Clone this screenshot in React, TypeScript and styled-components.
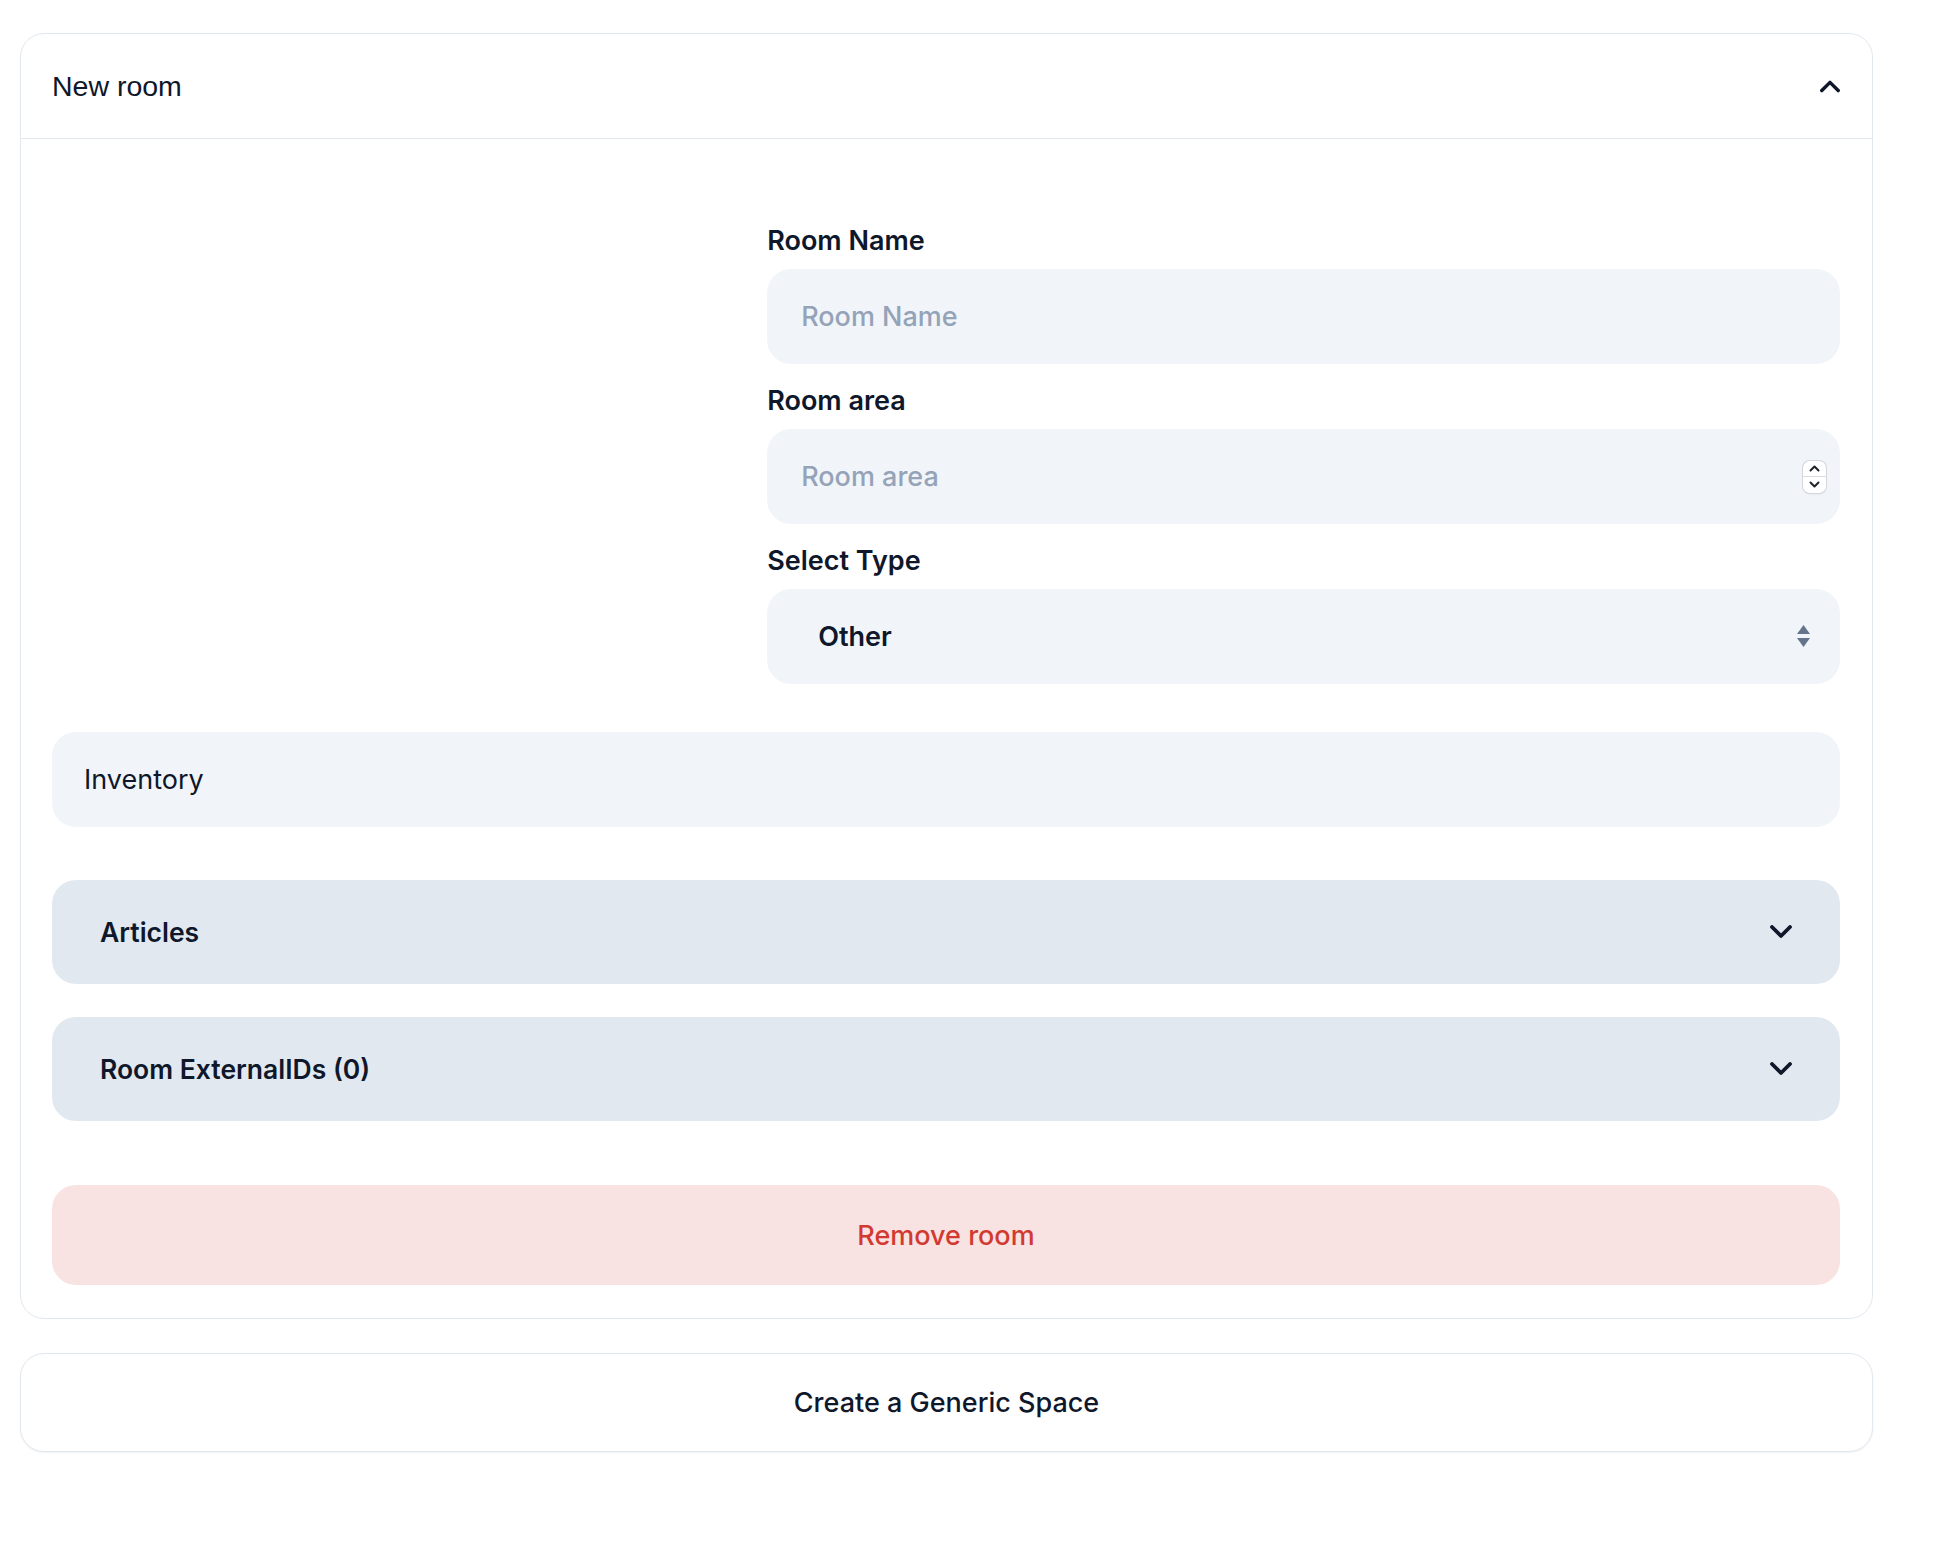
import React from "react";
import styled, { createGlobalStyle } from "styled-components";

const GlobalStyle = createGlobalStyle`
  * { box-sizing: border-box; }
  html, body { margin: 0; padding: 0; background: #ffffff; }
  body {
    font-family: Inter, "Noto Sans", "Liberation Sans", sans-serif;
    color: #0f172a;
    -webkit-font-smoothing: antialiased;
  }
`;

const Page = styled.div`
  width: 1936px;
  padding: 33px 63px 80px 20px;
  display: flex;
  flex-direction: column;
  gap: 34px;
`;

const Card = styled.section`
  border: 1px solid #e2e8f0;
  border-radius: 24px;
  background: #ffffff;
  overflow: hidden;
`;

const CardHeader = styled.header`
  height: 105px;
  border-bottom: 1px solid #e2e8f0;
  display: flex;
  align-items: center;
  justify-content: space-between;
  padding: 0 32px 0 31px;
`;

const HeaderTitle = styled.h2`
  margin: 0;
  font-family: "Liberation Sans", Arial, sans-serif;
  font-weight: 400;
  font-size: 28.5px;
  line-height: 32px;
  color: #0f172a;
`;

const IconButton = styled.button`
  border: 0;
  background: transparent;
  padding: 0;
  display: flex;
  align-items: center;
  justify-content: center;
  width: 20px;
  height: 20px;
  color: #0f172a;
  cursor: pointer;
`;

const CardBody = styled.div`
  padding: 86px 32px 33px 31px;
  display: flex;
  flex-direction: column;
`;

const FormGrid = styled.div`
  display: grid;
  grid-template-columns: 2fr 3fr;
`;

const FieldStack = styled.div`
  display: flex;
  flex-direction: column;
  gap: 21px;
`;

const Field = styled.label`
  display: flex;
  flex-direction: column;
  gap: 12px;
`;

const FieldLabel = styled.span`
  font-size: 27px;
  line-height: 32px;
  font-weight: 600;
  color: #0f172a;
`;

const InputWrap = styled.div`
  position: relative;
`;

const TextInput = styled.input`
  width: 100%;
  height: 95px;
  border: 0;
  border-radius: 24px;
  background: #f1f5f9;
  padding: 0 34px;
  font-family: Inter, sans-serif;
  font-size: 27px;
  font-weight: 500;
  color: #0f172a;
  outline: none;
  -moz-appearance: textfield;
  &::placeholder { color: #94a3b8; }
  &::-webkit-inner-spin-button,
  &::-webkit-outer-spin-button { -webkit-appearance: none; margin: 0; }
`;

const Spinner = styled.div`
  position: absolute;
  right: 14px;
  top: 50%;
  transform: translateY(-50%);
  width: 23px;
  height: 32px;
  border-radius: 7px;
  background: #ffffff;
  box-shadow: 0 0 0 1px #d4d7dc, 0 1px 2px rgba(0, 0, 0, 0.12);
  display: flex;
  flex-direction: column;
`;

const SpinHalf = styled.div<{ $top?: boolean }>`
  flex: 1;
  display: flex;
  align-items: center;
  justify-content: center;
  border-bottom: ${(p) => (p.$top ? "1px solid #d9dce1" : "0")};
  color: #1f2328;
`;

const SelectBox = styled.div`
  height: 95px;
  border-radius: 24px;
  background: #f1f5f9;
  display: flex;
  align-items: center;
  justify-content: space-between;
  padding: 0 30px 0 51px;
  font-size: 27px;
  font-weight: 600;
  color: #0f172a;
`;

const InventoryBar = styled.div`
  margin-top: 48px;
  height: 95px;
  border-radius: 24px;
  background: #f1f5f9;
  display: flex;
  align-items: center;
  padding: 0 32px;
  font-size: 27px;
  font-weight: 400;
  color: #0f172a;
`;

const AccordionRow = styled.button<{ $mt: number }>`
  margin-top: ${(p) => p.$mt}px;
  height: 104px;
  width: 100%;
  border: 0;
  border-radius: 24px;
  background: #e2e8f0;
  display: flex;
  align-items: center;
  justify-content: space-between;
  padding: 0 48px;
  font-family: Inter, sans-serif;
  font-size: 26.5px;
  font-weight: 600;
  color: #0f172a;
  cursor: pointer;
`;

const RemoveButton = styled.button`
  margin-top: 64px;
  height: 100px;
  width: 100%;
  border: 0;
  border-radius: 24px;
  background: #f8e2e2;
  font-family: Inter, sans-serif;
  font-size: 27px;
  font-weight: 500;
  color: #d23a31;
  cursor: pointer;
`;

const CreateButton = styled.button`
  height: 99px;
  width: 100%;
  border: 1px solid #e2e8f0;
  border-radius: 24px;
  background: #ffffff;
  box-shadow: 0 1px 2px rgba(15, 23, 42, 0.06);
  font-family: Inter, sans-serif;
  font-size: 27px;
  font-weight: 500;
  color: #0f172a;
  cursor: pointer;
`;

const Chevron = ({ up }: { up?: boolean }) => (
  <svg width="22" height="14" viewBox="0 0 22 14" fill="none">
    <polyline
      points={up ? "2,12 11,3 20,12" : "2,2 11,11 20,2"}
      stroke="currentColor"
      strokeWidth="3.8"
      strokeLinecap="round"
      strokeLinejoin="round"
    />
  </svg>
);

const SmallChevron = ({ up }: { up?: boolean }) => (
  <svg width="11" height="7" viewBox="0 0 11 7" fill="none">
    <polyline
      points={up ? "1.5,5.5 5.5,1.5 9.5,5.5" : "1.5,1.5 5.5,5.5 9.5,1.5"}
      stroke="currentColor"
      strokeWidth="2"
      strokeLinecap="round"
      strokeLinejoin="round"
    />
  </svg>
);

const SelectArrows = () => (
  <svg width="13" height="23" viewBox="0 0 13 23" fill="#64748b">
    <polygon points="6.5,0 13,9 0,9" />
    <polygon points="0,13 13,13 6.5,22" />
  </svg>
);

export default function App() {
  return (
    <>
      <GlobalStyle />
      <Page>
        <Card>
          <CardHeader>
            <HeaderTitle>New room</HeaderTitle>
            <IconButton aria-label="Collapse">
              <Chevron up />
            </IconButton>
          </CardHeader>
          <CardBody>
            <FormGrid>
              <div />
              <FieldStack>
                <Field>
                  <FieldLabel>Room Name</FieldLabel>
                  <TextInput type="text" placeholder="Room Name" />
                </Field>
                <Field>
                  <FieldLabel>Room area</FieldLabel>
                  <InputWrap>
                    <TextInput type="number" placeholder="Room area" />
                    <Spinner>
                      <SpinHalf $top>
                        <SmallChevron up />
                      </SpinHalf>
                      <SpinHalf>
                        <SmallChevron />
                      </SpinHalf>
                    </Spinner>
                  </InputWrap>
                </Field>
                <Field>
                  <FieldLabel>Select Type</FieldLabel>
                  <SelectBox role="combobox">
                    <span>Other</span>
                    <SelectArrows />
                  </SelectBox>
                </Field>
              </FieldStack>
            </FormGrid>
            <InventoryBar>Inventory</InventoryBar>
            <AccordionRow $mt={53}>
              <span>Articles</span>
              <Chevron />
            </AccordionRow>
            <AccordionRow $mt={33}>
              <span>Room ExternalIDs (0)</span>
              <Chevron />
            </AccordionRow>
            <RemoveButton>Remove room</RemoveButton>
          </CardBody>
        </Card>
        <CreateButton>Create a Generic Space</CreateButton>
      </Page>
    </>
  );
}
